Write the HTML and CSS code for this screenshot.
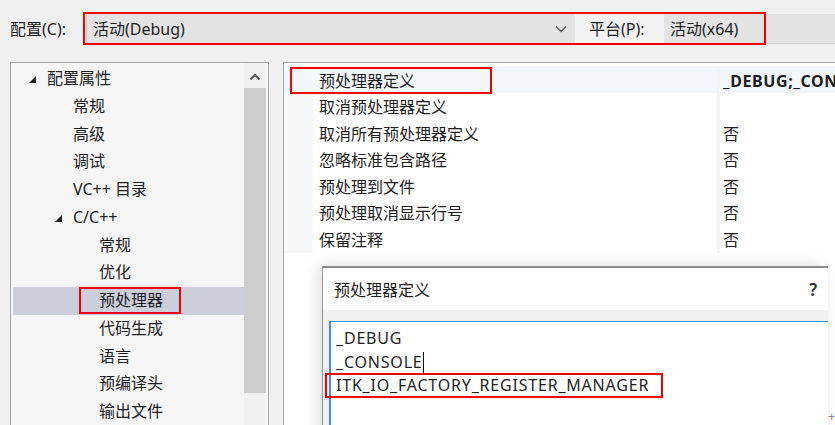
FILE: index.html
```html
<!DOCTYPE html>
<html lang="zh-CN">
<head>
<meta charset="utf-8">
<title>预处理器定义</title>
<link rel="stylesheet" href="styles.css">
</head>
<body>
<div class="page">
  <div class="topbar">
    <span class="lbl">配置(C):</span>
    <div class="combo combo-main">
      <span>活动(Debug)</span>
      <svg class="chev" width="12" height="8" viewBox="0 0 12 8"><path d="M1 1.5 L6 6.5 L11 1.5" fill="none" stroke="#555" stroke-width="1.3"/></svg>
    </div>
    <span class="lbl lbl-plat">平台(P):</span>
    <div class="combo combo-plat"><span>活动(x64)</span></div>
  </div>

  <div class="main">
    <div class="tree">
      <ul class="tree-list">
        <li class="lv0"><svg class="tri" width="7" height="7" viewBox="0 0 7 7"><polygon points="7,0 7,7 0,7" fill="#1e1e1e"/></svg>配置属性</li>
        <li class="lv1">常规</li>
        <li class="lv1">高级</li>
        <li class="lv1">调试</li>
        <li class="lv1">VC++ 目录</li>
        <li class="lv1 has-tri"><svg class="tri" width="7" height="7" viewBox="0 0 7 7"><polygon points="7,0 7,7 0,7" fill="#1e1e1e"/></svg>C/C++</li>
        <li class="lv2">常规</li>
        <li class="lv2">优化</li>
        <li class="lv2 selected"><span class="mark">预处理器</span></li>
        <li class="lv2">代码生成</li>
        <li class="lv2">语言</li>
        <li class="lv2">预编译头</li>
        <li class="lv2">输出文件</li>
      </ul>
      <div class="vscroll">
        <div class="sc-up"><svg width="12" height="8" viewBox="0 0 12 8"><path d="M1.5 6.5 L6 2 L10.5 6.5" fill="none" stroke="#555" stroke-width="2"/></svg></div>
        <div class="sc-thumb"></div>
      </div>
    </div>

    <div class="grid-panel">
      <div class="grid">
        <div class="row first"><div class="m"></div><div class="name">预处理器定义</div><div class="val bold">_DEBUG;_CONSOLE;ITK_IO_FACTORY_REGISTER_MANAGER</div></div>
        <div class="row"><div class="m"></div><div class="name">取消预处理器定义</div><div class="val"></div></div>
        <div class="row"><div class="m"></div><div class="name">取消所有预处理器定义</div><div class="val">否</div></div>
        <div class="row"><div class="m"></div><div class="name">忽略标准包含路径</div><div class="val">否</div></div>
        <div class="row"><div class="m"></div><div class="name">预处理到文件</div><div class="val">否</div></div>
        <div class="row"><div class="m"></div><div class="name">预处理取消显示行号</div><div class="val">否</div></div>
        <div class="row"><div class="m"></div><div class="name">保留注释</div><div class="val">否</div></div>
      </div>

      <div class="dialog">
        <div class="dlg-head">
          <span class="dlg-title">预处理器定义</span>
          <span class="dlg-help">?</span>
        </div>
        <div class="dlg-body">
          <div class="editor">
            <div class="line">_DEBUG</div>
            <div class="line">_CONSOLE<span class="caret"></span></div>
            <div class="line"><span class="mark-line">ITK_IO_FACTORY_REGISTER_MANAGER</span></div>
          </div>
        </div>
      </div>
    </div>
  </div>

  <div class="anno anno-top"></div>
  <div class="anno anno-prop"></div>
  <span class="corner">+</span>
</div>
</body>
</html>
```

FILE: styles.css
```css
* { box-sizing: border-box; }
html, body { margin: 0; padding: 0; }
body {
  background: #f0f0f0;
  font-family: "Noto Sans", "Noto Sans CJK SC", sans-serif;
  font-size: 16px;
  color: #1e1e1e;
}
.page {
  position: relative;
  width: 835px;
  height: 425px;
  overflow: hidden;
}

/* top bar */
.topbar {
  display: flex;
  align-items: center;
  height: 44px;
  padding-top: 14px;
}
.lbl {
  line-height: 30px;
  white-space: nowrap;
}
.topbar > .lbl:first-child {
  width: 86px;
  padding-left: 10px;
}
.combo {
  height: 30px;
  background: #e3e3e3;
  border-bottom: 1px solid #cfcfcf;
  display: flex;
  align-items: center;
  line-height: 30px;
}
.combo-main {
  width: 489px;
  padding-left: 6px;
  padding-right: 8px;
  justify-content: space-between;
  border-left: 1px solid #c8c8c8;
}
.lbl-plat {
  width: 89px;
  padding-left: 14px;
  height: 30px;
  background: #f2f2f2;
}
.combo-plat {
  flex: 1;
  padding-left: 6px;
}

/* main area */
.main {
  display: flex;
  align-items: flex-start;
  padding-top: 18px;
}
.tree {
  margin-left: 10px;
  width: 259px;
  height: 380px;
  background: #f5f5f5;
  border: 1px solid #a5a5a5;
  display: flex;
  padding-right: 2px;
}
.tree-list {
  list-style: none;
  margin: 0;
  padding: 2px 0 0 2px;
  flex: 1;
}
.tree-list li {
  height: 27.75px;
  line-height: 27.75px;
  white-space: nowrap;
  display: flex;
  align-items: center;
}
.tree-list .lv0 { padding-left: 16px; }
.tree-list .lv1 { padding-left: 60px; }
.tree-list .lv1.has-tri { padding-left: 42px; }
.tree-list .lv2 { padding-left: 86px; }
.tri { margin-right: 11px; margin-top: 2px; }
.selected { background: #cccedb; }
.mark {
  display: inline-block;
  border: 2px solid #f00000;
  height: 27px;
  line-height: 23px;
  padding: 0 16px 0 18px;
  margin-left: -20px;
}
.vscroll {
  width: 22px;
  background: #f0f0f0;
  display: flex;
  flex-direction: column;
}
.sc-up {
  height: 25px;
  display: flex;
  align-items: center;
  justify-content: center;
  padding-top: 2px;
}
.sc-thumb {
  height: 305px;
  background: #cdcdcd;
}

/* property grid */
.grid-panel {
  position: relative;
  margin-left: 14px;
  flex: 1;
  height: 380px;
  background: #ffffff;
  border-left: 1px solid #a5a5a5;
  border-top: 1px solid #a5a5a5;
  padding-top: 3px;
}
.grid { background: #f4f5f7; }
.row {
  display: grid;
  grid-template-columns: 29px 404px 1fr;
  height: 26.5px;
  border-bottom: 2px solid #f2f3f5;
}
.row .m { background: #f7f8fa; }
.row .name {
  background: #ffffff;
  line-height: 25px;
  padding-top: 2.5px;
  padding-left: 6px;
  white-space: nowrap;
}
.row .val {
  background: #ffffff;
  border-left: 3px solid #f2f3f5;
  line-height: 25px;
  padding-top: 2.5px;
  padding-left: 3px;
  white-space: nowrap;
  overflow: hidden;
}
.row.first .m,
.row.first .name,
.row.first .val { background: #f3f6fb; }
.row .val.bold { font-weight: 700; letter-spacing: 0.6px; }

/* dialog */
.dialog {
  position: absolute;
  left: 38px;
  top: 203px;
  width: 506px;
  height: 180px;
  background: #f0f0f0;
  border-top: 2px solid #8e8e8e;
  border-left: 1px solid #9a9a9a;
  box-shadow: -4px 0 14px rgba(0,0,0,0.14);
}
.dlg-head {
  height: 42px;
  background: #ffffff;
  display: flex;
  align-items: center;
  justify-content: space-between;
  padding: 0 11px 0 11px;
}
.dlg-title { line-height: 24px; padding-top: 2px; }
.dlg-help { font-size: 17px; font-weight: 600; color: #333; }
.dlg-body {
  padding: 11px 0 0 6px;
}
.editor {
  background: #ffffff;
  border-top: 1.5px solid #3d8ee6;
  border-left: 2px solid #3d8ee6;
  height: 120px;
  padding: 5px 0 0 5px;
  letter-spacing: 0.8px;
}
.line {
  height: 23.5px;
  line-height: 23.5px;
  white-space: nowrap;
  display: flex;
  align-items: center;
}
.caret {
  display: inline-block;
  width: 1px;
  height: 21px;
  background: #000;
  margin-left: 0;
}
.mark-line {
  display: inline-block;
  border: 2px solid #f00000;
  height: 25px;
  line-height: 21px;
  padding: 0 12px 0 9px;
  margin-left: -11px;
}

/* annotation boxes */
.anno {
  position: absolute;
  border: 2px solid #f00000;
  pointer-events: none;
}
.anno-top { left: 83px; top: 12px; width: 683px; height: 33px; }
.anno-prop { left: 290px; top: 67px; width: 202px; height: 27px; }
.corner {
  position: absolute;
  right: 0;
  top: 408px;
  font-size: 12px;
  color: #888;
}
```
